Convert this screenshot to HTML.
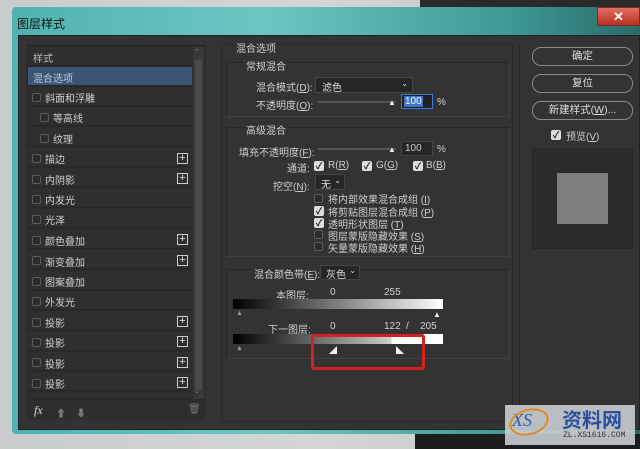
<!DOCTYPE html>
<html><head><meta charset="utf-8"><style>
*{margin:0;padding:0;box-sizing:border-box}
body{width:640px;height:449px;overflow:hidden;position:relative;background:linear-gradient(90deg,#c9cccd,#d4d6d6 50%,#bfc2c2);font-family:"Liberation Sans","Noto Sans CJK SC",sans-serif;font-size:10px;color:#cfcfcf}
.a{position:absolute}
.t{position:absolute;white-space:nowrap}
.win{left:12px;top:7px;width:628px;height:427px;background:linear-gradient(90deg,#4fb3b0,#6cc6c2 40%,#3e9894 80%,#2a6b68);border-radius:4px 0 0 4px}
.body{left:18px;top:35px;width:622px;height:395px;background:#333;border:1px solid #222}
.li{position:absolute;left:28px;width:164px;height:19px;background:#2f2f2f;border-bottom:1px solid #262626}
.cb{position:absolute;width:9px;height:9px;border:1px solid #5a5a5a;border-radius:2px;background:#2b2b2b}
.ck{position:absolute;width:10px;height:10px;background:#ddd;border-radius:2px;color:#222;font-size:9px;line-height:10px;text-align:center;font-weight:bold}
.plus{position:absolute;left:177px;width:11px;height:11px;border:1px solid #ccc;color:#eee;font-size:11px;line-height:9px;text-align:center}
.grp{position:absolute;border:1px solid #262626;border-right-color:#404040;border-bottom-color:#404040}
.btn{position:absolute;left:532px;width:101px;height:19px;border:1px solid #8a8a8a;border-radius:9px;text-align:center;line-height:17px;color:#ddd;font-size:10.5px}
.sel{position:absolute;background:#262626;border:1px solid #444;color:#ddd}
.grad{position:absolute;left:233px;width:210px;height:10px;background:linear-gradient(90deg,#000,#fff)}
</style></head><body>
<div class="a" style="left:420px;top:0;width:220px;height:10px;background:#2a2a2a"></div>
<div class="a" style="left:415px;top:434px;width:225px;height:15px;background:#1d1d1d"></div>
<div class="a win"></div>
<div class="t" style="left:17px;top:15px;font-size:12px;color:#111">图层样式</div>
<div class="a" style="left:597px;top:7px;width:43px;height:19px;background:linear-gradient(#e07060,#b83020);border:1px solid #7a2a20;color:#fff;font-size:13px;text-align:center;line-height:17px;font-weight:bold">✕</div>
<div class="a body"></div>
<div class="a" style="left:27px;top:45px;width:178px;height:375px;background:#2b2b2b;border:1px solid #262626"></div>
<div class="a" style="left:193px;top:47px;width:11px;height:352px;background:#393939"></div>
<div class="a" style="left:195px;top:60px;width:7px;height:330px;background:#4a4a4a"></div>
<div class="t" style="left:194px;top:48px;font-size:7px;color:#888">⌃</div>
<div class="t" style="left:194px;top:387px;font-size:7px;color:#888">⌄</div>

<div class="li" style="top:47px"></div><div class="t" style="left:33px;top:50px;color:#bbb">样式</div>
<div class="li" style="top:67px;background:#3b5575"></div><div class="t" style="left:33px;top:70px;color:#bcd">混合选项</div>
<div class="li" style="top:87px"></div><div class="cb" style="left:32px;top:93px"></div><div class="t" style="left:45px;top:90px">斜面和浮雕</div>
<div class="li" style="top:107px"></div><div class="cb" style="left:40px;top:113px"></div><div class="t" style="left:53px;top:110px">等高线</div>
<div class="li" style="top:127px"></div><div class="cb" style="left:40px;top:134px"></div><div class="t" style="left:53px;top:131px">纹理</div>
<div class="li" style="top:148px"></div><div class="cb" style="left:32px;top:154px"></div><div class="t" style="left:45px;top:151px">描边</div><div class="plus" style="top:153px">+</div>
<div class="li" style="top:168px"></div><div class="cb" style="left:32px;top:175px"></div><div class="t" style="left:45px;top:172px">内阴影</div><div class="plus" style="top:173px">+</div>
<div class="li" style="top:189px"></div><div class="cb" style="left:32px;top:195px"></div><div class="t" style="left:45px;top:192px">内发光</div>
<div class="li" style="top:209px"></div><div class="cb" style="left:32px;top:215px"></div><div class="t" style="left:45px;top:212px">光泽</div>
<div class="li" style="top:230px"></div><div class="cb" style="left:32px;top:236px"></div><div class="t" style="left:45px;top:233px">颜色叠加</div><div class="plus" style="top:234px">+</div>
<div class="li" style="top:250px"></div><div class="cb" style="left:32px;top:256px"></div><div class="t" style="left:45px;top:254px">渐变叠加</div><div class="plus" style="top:255px">+</div>
<div class="li" style="top:271px"></div><div class="cb" style="left:32px;top:277px"></div><div class="t" style="left:45px;top:274px">图案叠加</div>
<div class="li" style="top:291px"></div><div class="cb" style="left:32px;top:297px"></div><div class="t" style="left:45px;top:294px">外发光</div>
<div class="li" style="top:311px"></div><div class="cb" style="left:32px;top:318px"></div><div class="t" style="left:45px;top:315px">投影</div><div class="plus" style="top:316px">+</div>
<div class="li" style="top:332px"></div><div class="cb" style="left:32px;top:338px"></div><div class="t" style="left:45px;top:335px">投影</div><div class="plus" style="top:336px">+</div>
<div class="li" style="top:352px"></div><div class="cb" style="left:32px;top:358px"></div><div class="t" style="left:45px;top:356px">投影</div><div class="plus" style="top:357px">+</div>
<div class="li" style="top:372px"></div><div class="cb" style="left:32px;top:379px"></div><div class="t" style="left:45px;top:376px">投影</div><div class="plus" style="top:377px">+</div>
<div class="li" style="top:393px;height:6px"></div>
<div class="a" style="left:27px;top:400px;width:178px;height:20px;background:#2e2e2e"></div>
<div class="t" style="left:34px;top:403px;font-size:12px;font-style:italic;color:#ddd;font-family:'Liberation Serif',serif">fx</div>
<div class="t" style="left:56px;top:405px;color:#777">⬆</div><div class="t" style="left:76px;top:405px;color:#777">⬇</div>
<div class="t" style="left:188px;top:404px;color:#777">🗑</div>

<div class="grp" style="left:221px;top:44px;width:292px;height:378px;border-color:#2a2a2a"></div>
<div class="t" style="left:236px;top:40px">混合选项</div>
<div class="grp" style="left:226px;top:62px;width:284px;height:55px"></div>
<div class="t" style="left:244px;top:58px;background:#333;padding:0 2px">常规混合</div>
<div class="t" style="left:256px;top:79px">混合模式(<u>D</u>):</div>
<div class="sel" style="left:315px;top:77px;width:98px;height:16px;padding:1px 0 0 6px">滤色<span style="position:absolute;right:4px;font-size:8px">⌄</span></div>
<div class="t" style="left:256px;top:97px">不透明度(<u>O</u>):</div>
<div class="a" style="left:318px;top:101px;width:78px;height:2px;background:#555"></div>
<div class="t" style="left:388px;top:98px;color:#eee;font-size:8px">▲</div>
<div class="a" style="left:401px;top:94px;width:32px;height:15px;border:1px solid #3a7ad0;background:#1f1f1f"><span style="background:#3b76c8;color:#fff;padding:0 1px;position:absolute;left:2px;top:1px">100</span></div>
<div class="t" style="left:437px;top:97px">%</div>

<div class="grp" style="left:226px;top:127px;width:284px;height:130px"></div>
<div class="t" style="left:244px;top:122px;background:#333;padding:0 2px">高级混合</div>
<div class="t" style="left:239px;top:144px">填充不透明度(<u>F</u>):</div>
<div class="a" style="left:318px;top:148px;width:78px;height:2px;background:#555"></div>
<div class="t" style="left:388px;top:145px;color:#eee;font-size:8px">▲</div>
<div class="a" style="left:401px;top:141px;width:32px;height:15px;border:1px solid #444;background:#262626;padding:1px 0 0 3px">100</div>
<div class="t" style="left:437px;top:144px">%</div>
<div class="t" style="left:287px;top:160px">通道:</div>
<div class="ck" style="left:314px;top:161px">✓</div><div class="t" style="left:328px;top:160px">R(<u>R</u>)</div>
<div class="ck" style="left:362px;top:161px">✓</div><div class="t" style="left:376px;top:160px">G(<u>G</u>)</div>
<div class="ck" style="left:413px;top:161px">✓</div><div class="t" style="left:426px;top:160px">B(<u>B</u>)</div>
<div class="t" style="left:273px;top:178px">挖空(<u>N</u>):</div>
<div class="sel" style="left:315px;top:174px;width:30px;height:16px;padding:1px 0 0 5px">无<span style="position:absolute;right:3px;font-size:8px">⌄</span></div>
<div class="cb" style="left:314px;top:194px"></div><div class="t" style="left:328px;top:191px">将内部效果混合成组 (<u>I</u>)</div>
<div class="ck" style="left:314px;top:206px">✓</div><div class="t" style="left:328px;top:204px">将剪贴图层混合成组 (<u>P</u>)</div>
<div class="ck" style="left:314px;top:218px">✓</div><div class="t" style="left:328px;top:216px">透明形状图层 (<u>T</u>)</div>
<div class="cb" style="left:314px;top:230px"></div><div class="t" style="left:328px;top:228px">图层蒙版隐藏效果 (<u>S</u>)</div>
<div class="cb" style="left:314px;top:242px"></div><div class="t" style="left:328px;top:240px">矢量蒙版隐藏效果 (<u>H</u>)</div>

<div class="grp" style="left:226px;top:269px;width:284px;height:90px"></div>
<div class="t" style="left:252px;top:266px;background:#333;padding:0 2px">混合颜色带(<u>E</u>):</div>
<div class="sel" style="left:320px;top:265px;width:40px;height:15px;padding:0 0 0 5px">灰色<span style="position:absolute;right:3px;font-size:8px">⌄</span></div>
<div class="t" style="left:276px;top:287px">本图层:</div>
<div class="t" style="left:330px;top:287px">0</div><div class="t" style="left:384px;top:287px">255</div>
<div class="grad" style="top:299px"></div>
<div class="t" style="left:236px;top:310px;font-size:7px;color:#999">▲</div>
<div class="t" style="left:433px;top:310px;font-size:8px;color:#eee">▲</div>
<div class="t" style="left:268px;top:321px">下一图层:</div>
<div class="t" style="left:330px;top:321px">0</div><div class="t" style="left:384px;top:321px">122</div><div class="t" style="left:406px;top:321px">/</div><div class="t" style="left:420px;top:321px">205</div>
<div class="grad" style="top:334px;background:linear-gradient(90deg,#000,#ccc 75%,#fff 76%)"></div>
<div class="t" style="left:236px;top:345px;font-size:7px;color:#999">▲</div>
<div class="t" style="left:329px;top:345px;font-size:8px;color:#eee">◢</div>
<div class="t" style="left:396px;top:345px;font-size:8px;color:#eee">◣</div>
<div class="a" style="left:311px;top:334px;width:114px;height:36px;border:3px solid #d42020;border-radius:3px"></div>

<div class="a" style="left:519px;top:44px;width:1px;height:376px;background:#262626"></div>
<div class="btn" style="top:47px">确定</div>
<div class="btn" style="top:74px">复位</div>
<div class="btn" style="top:101px">新建样式(<u>W</u>)...</div>
<div class="ck" style="left:551px;top:130px">✓</div><div class="t" style="left:566px;top:128px">预览(<u>V</u>)</div>
<div class="a" style="left:532px;top:148px;width:101px;height:101px;background:#2b2b2b;border:1px solid #262626"></div>
<div class="a" style="left:557px;top:173px;width:51px;height:51px;background:#7d7d7d"></div>

<div class="a" style="left:505px;top:405px;width:130px;height:40px;background:rgba(200,205,210,0.9)"></div>
<div class="t" style="left:512px;top:410px;font-size:18px;font-style:italic;color:#2a5fa8;font-family:'Liberation Serif',serif">XS</div>
<div class="a" style="left:509px;top:409px;width:40px;height:26px;border:2px solid #e08a20;border-radius:50%;transform:rotate(-15deg)"></div>
<div class="t" style="left:562px;top:404px;font-size:20px;font-weight:bold;color:#2a4fa0">资料网</div>
<div class="t" style="left:563px;top:431px;font-size:8px;color:#333;font-family:'Liberation Mono',monospace">ZL.XS1616.COM</div>
</body></html>
